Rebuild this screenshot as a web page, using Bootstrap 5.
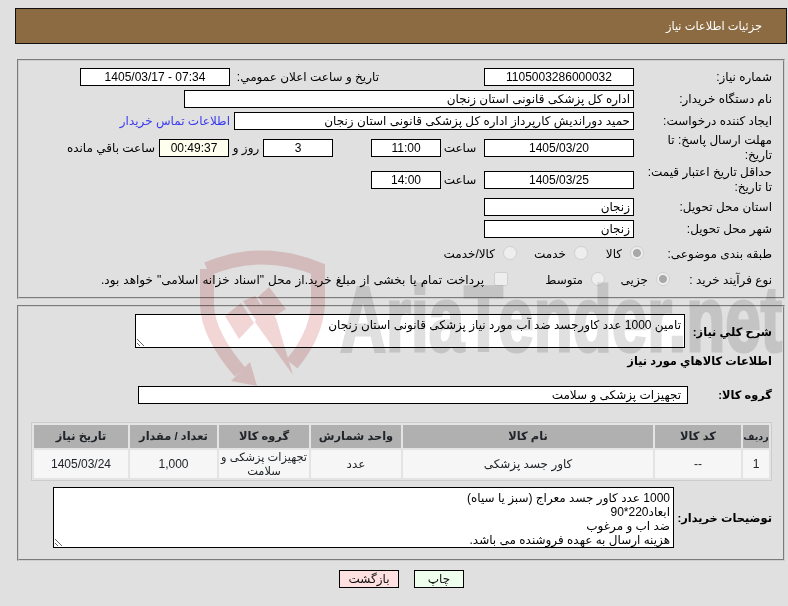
<!DOCTYPE html>
<html lang="fa" dir="rtl">
<head>
<meta charset="utf-8">
<title>جزئیات اطلاعات نیاز</title>
<link rel="stylesheet" href="https://cdn.jsdelivr.net/npm/bootstrap@5.3.0/dist/css/bootstrap.min.css">
<style>
html,body{height:100%}
body{background:#e0e0e0;color:#000;font-family:"Liberation Sans","DejaVu Sans",sans-serif;font-size:12px;line-height:15px;overflow:hidden;position:relative}
.mark-layer{position:absolute;left:0;top:0;width:788px;height:606px;z-index:2;pointer-events:none;mix-blend-mode:multiply}
.page-wrap{position:relative;z-index:1;padding:8px 1px 0 15px}
.top-bar{height:36px;background:#8c6b42;border:1px solid #111;color:#fff;padding:0 24px;font-size:11.4px}
.box-a,.box-b{border:2px groove #cfcfcf;margin-left:2px;margin-right:2px;padding:7px 11px 7px 0}
.box-a{margin-top:15px;height:240px}
.box-b{margin-top:6px;height:256px;padding-bottom:0}
.frow{height:18px}
.frow-tall{height:28px}
.frow-opt{height:22px;padding-top:2px}
.lab{width:138px;flex:none}
.lab-two{width:144px;flex:none}
.val{height:18px;background:#fff;border:1px solid #000;flex:none;padding:0 3px;line-height:16px;white-space:nowrap;overflow:hidden}
.val-wide{padding-right:6px}
.w150{width:150px}.w450{width:450px}.w400{width:400px}.w70{width:70px}
.gap105{margin-right:105px}.gap5{margin-right:5px}
.w-link{margin-right:4px;color:#3a3af0;text-decoration:none}
.cell-a{width:43px;padding-right:5px;text-align:center;flex:none}
.cell-b{width:34px;text-align:center;flex:none}
.cell-c{margin-right:4px;flex:none}
.timegap{margin-right:38px}
.timebox{background:#ffffee}
.o1{width:56px}.o2{width:71px}.o3{width:65px}.o4{width:97px}
.lab-o1{width:128px;flex:none}.lab-o2{width:102px;flex:none}
.form-check-input.fake{width:14px;height:14px;margin:0 0 2px 8px;background-color:#eee;border:1px solid #d0d0d0;opacity:1;flex:none;float:none}
.form-check-input.fake:checked{background:radial-gradient(circle,#a8a8a8 0 3.5px,#eee 4.5px)}
.form-check-input.sq{border-radius:2px;margin-left:10px}
.pay-text{word-spacing:.8px}
.ta{display:block;background:#fff;border:1px solid #000;border-radius:0;padding:3px 3px 0;font:inherit;color:inherit;line-height:14px;flex:none;outline:0}
.ta1{width:550px;height:34px}
.ta2{width:621px;height:61px}
.lab-b{font-weight:700;font-size:11.4px;white-space:nowrap}
.lab87{width:87px;flex:none;padding-top:2px}.lab84{width:84px;flex:none;padding-top:1px}.lab98{width:98px;flex:none;padding-top:1px}
.title-row{height:16px;margin-top:6px}
.group-row{margin-top:16px;height:18px}
.w550{width:550px}
.tbl-wrap{margin:18px 0 0;width:741px}
.tbl{width:741px;margin:0;border:1px solid #ccc;border-collapse:separate;border-spacing:2px;table-layout:fixed;background:#e4e4e4;text-align:center;font-size:12px}
.tbl th{background:#b0b0b0;height:23px;padding:0;font-weight:700;font-size:11.4px;border:0;vertical-align:middle;white-space:nowrap}
.tbl th.th-tight{font-size:9.6px}
.tbl td{background:#f6f6f6;height:28px;padding:0;border:0;vertical-align:middle;line-height:14px;white-space:nowrap}
.tbl td.td-tight{font-size:11.4px}
.c1{width:26px}.c2{width:86px}.c3{width:250px}.c4{width:90px}.c5{width:90px}.c6{width:87px}
.buyer-row{margin-top:6px}
.foot{margin-top:9px;padding-right:323px}
.foot-btn{width:50px;height:18px;border:1px solid #000;border-radius:0;padding:0;font-size:12px;line-height:16px;color:#111;font-family:inherit}
.print-btn{background:#eeffee}
.back-btn{background:#ffe0e0;width:60px;margin-right:15px}
.wm-t{font-family:"Liberation Sans",sans-serif;font-weight:700;font-size:92px;fill:#e0e0e0;stroke:#e0e0e0;stroke-width:3}
</style>
</head>
<body>
<svg class="mark-layer" viewBox="0 0 788 606" aria-hidden="true">
  <g fill="none" stroke="#f2d5d5" stroke-width="14">
    <path d="M207 269Q262 246 318 269V305Q316 335 292 364"/>
    <path d="M207 269V305Q208 335 240 372"/>
  </g>
  <g fill="#f2d5d5">
    <path d="M231 381L250 362L257 386Z"/>
    <path d="M262 303L276 318L293 375L255 322Z"/>
    <path d="M225 316L241 303L254 323L239 339Z"/>
    <path d="M258 297L269 287L286 309L272 318Z"/>
    <path d="M243 301L255 296L266 312L256 320Z"/>
  </g>
  <text class="wm-t" x="340" y="351" textLength="442" lengthAdjust="spacingAndGlyphs" direction="ltr">AriaTender.net</text>
</svg>
<div class="page-wrap">
  <div class="top-bar d-flex align-items-center">جزئیات اطلاعات نیاز</div>

  <div class="box-a d-flex flex-column gap-1">
    <div class="frow d-flex align-items-center">
      <div class="lab">شماره نیاز:</div>
      <div class="val w150 text-center">1105003286000032</div>
      <div class="lab-two gap105">تاریخ و ساعت اعلان عمومي:</div>
      <div class="val w150 text-center gap5" dir="ltr">1405/03/17 - 07:34</div>
    </div>
    <div class="frow d-flex align-items-center">
      <div class="lab">نام دستگاه خریدار:</div>
      <div class="val w450">اداره کل پزشکی قانونی استان زنجان</div>
    </div>
    <div class="frow d-flex align-items-center">
      <div class="lab">ایجاد کننده درخواست:</div>
      <div class="val w400">حمید دوراندیش کارپرداز اداره کل پزشکی قانونی استان زنجان</div>
      <a class="w-link" href="#">اطلاعات تماس خریدار</a>
    </div>
    <div class="frow-tall d-flex align-items-center">
      <div class="lab">مهلت ارسال پاسخ: تا<br>تاریخ:</div>
      <div class="val w150 text-center">1405/03/20</div>
      <div class="cell-a">ساعت</div>
      <div class="val w70 text-center">11:00</div>
      <div class="val w70 text-center timegap">3</div>
      <div class="cell-b">روز و</div>
      <div class="val w70 text-center timebox">00:49:37</div>
      <div class="cell-c">ساعت باقي مانده</div>
    </div>
    <div class="frow-tall d-flex align-items-center">
      <div class="lab">حداقل تاریخ اعتبار قیمت:<br>تا تاریخ:</div>
      <div class="val w150 text-center">1405/03/25</div>
      <div class="cell-a">ساعت</div>
      <div class="val w70 text-center">14:00</div>
    </div>
    <div class="frow d-flex align-items-center">
      <div class="lab">استان محل تحویل:</div>
      <div class="val w150">زنجان</div>
    </div>
    <div class="frow d-flex align-items-center">
      <div class="lab">شهر محل تحویل:</div>
      <div class="val w150">زنجان</div>
    </div>
    <div class="frow-opt d-flex align-items-center">
      <div class="lab-o1">طبقه بندی موضوعی:</div>
      <div class="o1 d-flex align-items-center"><input class="form-check-input fake" type="radio" checked disabled><span>کالا</span></div>
      <div class="o2 d-flex align-items-center"><input class="form-check-input fake" type="radio" disabled><span>خدمت</span></div>
      <div class="d-flex align-items-center"><input class="form-check-input fake" type="radio" disabled><span>کالا/خدمت</span></div>
    </div>
    <div class="frow-opt d-flex align-items-center">
      <div class="lab-o2">نوع فرآیند خرید :</div>
      <div class="o3 d-flex align-items-center"><input class="form-check-input fake" type="radio" checked disabled><span>جزیی</span></div>
      <div class="o4 d-flex align-items-center"><input class="form-check-input fake" type="radio" disabled><span>متوسط</span></div>
      <div class="d-flex align-items-center"><input class="form-check-input fake sq" type="checkbox" disabled><span class="pay-text">پرداخت تمام یا بخشی از مبلغ خرید.از محل "اسناد خزانه اسلامی" خواهد بود.</span></div>
    </div>
  </div>

  <div class="box-b">
    <div class="d-flex align-items-center">
      <div class="lab87 lab-b">شرح كلي نياز:</div>
      <textarea class="ta ta1" readonly>تامین 1000 عدد کاورجسد ضد آب مورد نیاز پزشکی قانونی استان زنجان</textarea>
    </div>
    <div class="title-row lab-b">اطلاعات كالاهاي مورد نياز</div>
    <div class="group-row d-flex align-items-center">
      <div class="lab84 lab-b">گروه کالا:</div>
      <div class="val w550 val-wide">تجهیزات پزشکی و سلامت</div>
    </div>
    <div class="tbl-wrap">
      <table class="table tbl">
        <colgroup><col class="c1"><col class="c2"><col class="c3"><col class="c4"><col class="c5"><col class="c6"><col></colgroup>
        <thead><tr><th class="th-tight">ردیف</th><th>کد کالا</th><th>نام کالا</th><th>واحد شمارش</th><th>گروه کالا</th><th>تعداد / مقدار</th><th>تاریخ نیاز</th></tr></thead>
        <tbody><tr><td>1</td><td>--</td><td>کاور جسد پزشکی</td><td>عدد</td><td class="td-tight">تجهیزات پزشکی و<br>سلامت</td><td>1,000</td><td>1405/03/24</td></tr></tbody>
      </table>
    </div>
    <div class="buyer-row d-flex align-items-center">
      <div class="lab98 lab-b">توضیحات خریدار:</div>
      <textarea class="ta ta2" readonly>1000 عدد کاور جسد معراج (سبز یا سیاه)
ابعاد220*90
ضد اب و مرغوب
هزینه ارسال به عهده فروشنده می باشد.</textarea>
    </div>
  </div>

  <div class="foot d-flex">
    <button type="button" class="btn foot-btn print-btn">چاپ</button>
    <button type="button" class="btn foot-btn back-btn">بازگشت</button>
  </div>
</div>
<script src="https://cdn.jsdelivr.net/npm/bootstrap@5.3.0/dist/js/bootstrap.bundle.min.js"></script>
</body>
</html>
